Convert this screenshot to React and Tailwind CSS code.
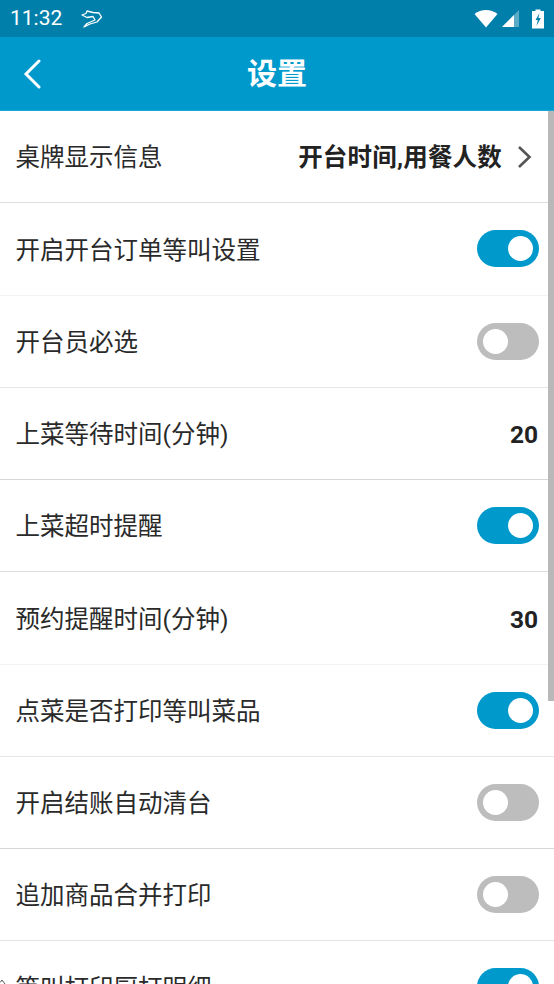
const rows = [
  { label: "桌牌显示信息", type: "link", value: "开台时间,用餐人数", line: "border-[#dedede]" },
  { label: "开启开台订单等叫设置", type: "switch", on: true, line: "border-[#f3f3f3]" },
  { label: "开台员必选", type: "switch", on: false, line: "border-[#e6e6e6]" },
  { label: "上菜等待时间(分钟)", type: "number", value: "20", line: "border-[#d6d6d6]" },
  { label: "上菜超时提醒", type: "switch", on: true, line: "border-[#dedede]" },
  { label: "预约提醒时间(分钟)", type: "number", value: "30", line: "border-[#f3f3f3]" },
  { label: "点菜是否打印等叫菜品", type: "switch", on: true, line: "border-[#e6e6e6]" },
  { label: "开启结账自动清台", type: "switch", on: false, line: "border-[#d6d6d6]" },
  { label: "追加商品合并打印", type: "switch", on: false, line: "border-[#e2e2e2]" },
  { label: "等叫打印厨打明细", type: "switch", on: true, line: "border-transparent" },
];

function Switch({ on }) {
  return (
    <div
      className={`flex h-[37px] w-[62px] items-center rounded-full px-[6px] ${
        on ? "justify-end bg-[#0099cc]" : "justify-start bg-[#bdbdbd]"
      }`}
    >
      <div className="h-[25px] w-[25px] rounded-full bg-white" />
    </div>
  );
}

function Row({ row }) {
  return (
    <div className={`flex h-[92.25px] shrink-0 items-center justify-between border-b pl-[15.5px] pr-[15px] ${row.line}`}>
      <span className="pt-[4px] text-[24.5px] leading-none text-[#2a2a2a]">{row.label}</span>
      {row.type === "switch" && <Switch on={row.on} />}
      {row.type === "number" && (
        <span className="mr-px pt-[4px] text-[24.5px] font-bold leading-none text-[#222222]">{row.value}</span>
      )}
      {row.type === "link" && (
        <div className="flex items-center">
          <span className="pt-[4px] text-[24.5px] font-bold leading-none tracking-[0.2px] text-[#222222]">{row.value}</span>
          <svg className="ml-[15px] mr-[7px]" width="15" height="24" viewBox="0 0 15 24" fill="none" stroke="#555555" strokeWidth="2.6">
            <path d="M2 2 L12.5 12 L2 22" />
          </svg>
        </div>
      )}
    </div>
  );
}

export default function App() {
  return (
    <div
      className="relative flex h-[984px] w-[554px] flex-col overflow-hidden bg-white"
      style={{ fontFamily: 'Roboto, "Noto Sans CJK SC", sans-serif' }}
    >
      {/* Status bar */}
      <div className="flex h-[37px] shrink-0 items-center justify-between bg-[#007fab] pl-[10px] pr-[10px] text-white">
        <div className="flex items-center">
          <span className="text-[21px] leading-none">11:32</span>
          <svg className="ml-[19px]" width="22" height="18" viewBox="0 0 22 18" fill="none" stroke="white" strokeWidth="1.3" strokeLinejoin="round" strokeLinecap="round">
            <path d="M1 5 L5 3.5 L6 1 L12 2.5 L18 3 L20.5 7 L16 12 L9 14 L3 17 L6 13.5 L14 10 L12 6.5 L6 7.5 Z" />
          </svg>
        </div>
        <div className="flex items-center">
          <svg width="24" height="20" viewBox="0 0 24 20">
            <path d="M0.5 5 C7 -0.5 17 -0.5 23.5 5 L12 18.5 Z" fill="white" />
          </svg>
          <svg className="ml-[4px]" width="18" height="20" viewBox="0 0 18 20">
            <path d="M17 1 V18 H0 Z" fill="white" fillOpacity="0.35" />
            <path d="M12 6 V18 H0 Z" fill="white" />
          </svg>
          <svg className="ml-[12px]" width="12" height="20" viewBox="0 0 12 20">
            <path d="M3.5 0.5 H8.5 V2 H12 V19.5 H0 V2 H3.5 Z" fill="white" />
            <path d="M7.5 4 L3.5 11 H5.8 L4.5 17 L8.8 9 H6.4 Z" fill="#007fab" />
          </svg>
        </div>
      </div>

      {/* Toolbar */}
      <div className="relative flex h-[74px] shrink-0 items-center justify-center border-b border-[#19a8d8] bg-[#0099cc]">
        <svg className="absolute left-[23px] top-[22px]" width="18" height="30" viewBox="0 0 18 30" fill="none" stroke="white" strokeWidth="3" strokeLinecap="round">
          <path d="M16 2 L3 15 L16 28" />
        </svg>
        <span className="text-[30px] font-bold leading-none text-white">设置</span>
      </div>

      {/* Settings list */}
      <div className="flex flex-1 flex-col overflow-hidden">
        {rows.map((row) => (
          <Row key={row.label} row={row} />
        ))}
      </div>

      {/* Scrollbar thumb */}
      <div className="absolute right-0 top-[111px] h-[590px] w-[6px] bg-[#b8b8b8]" />

      {/* Mark at the bottom-left edge */}
      <svg className="absolute bottom-0 left-0" width="6" height="5" viewBox="0 0 6 5" fill="none" stroke="#555555" strokeWidth="1">
        <path d="M0 3.5 L2 1 L5 5" />
      </svg>
    </div>
  );
}
